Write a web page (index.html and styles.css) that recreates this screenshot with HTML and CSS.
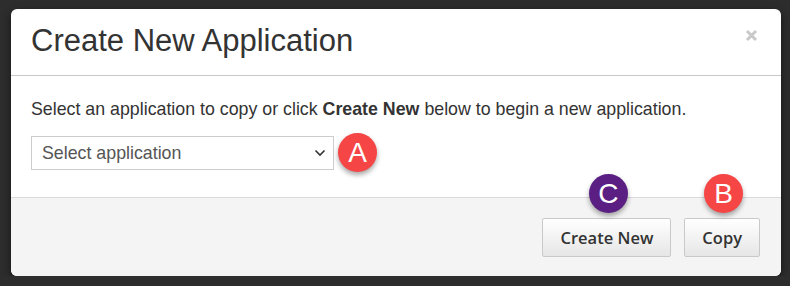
FILE: index.html
```html
<!DOCTYPE html>
<html lang="en">

<head>
    <meta charset="utf-8">
    <meta name="viewport" content="width=device-width, initial-scale=1.0">
    <title>Create New Application</title>
    <link rel="stylesheet" href="styles.css">
</head>

<body>
    <div class="modal">
        <header class="modal-header">
            <h1 class="modal-title">Create New Application</h1>
            <button class="close" aria-label="Close">
                <svg width="13" height="13" viewBox="0 0 13 13">
                    <path d="M2 2 L11 11 M11 2 L2 11" stroke="#c9c9c9" stroke-width="3" />
                </svg>
            </button>
        </header>

        <section class="modal-body">
            <p class="intro">Select an application to copy or click <b>Create New</b> below to begin a new application.</p>
            <div class="select-row">
                <div class="select">
                    <span>Select application</span>
                    <svg width="12" height="8" viewBox="0 0 12 8">
                        <path d="M1.5 1.5 L6 6 L10.5 1.5" fill="none" stroke="#333" stroke-width="1.6" />
                    </svg>
                </div>
                <span class="badge red">A</span>
            </div>
        </section>

        <footer class="modal-footer">
            <button class="btn">Create New<span class="badge purple">C</span></button>
            <button class="btn">Copy<span class="badge red">B</span></button>
        </footer>
    </div>
</body>

</html>
```

FILE: styles.css
```css
* {
    box-sizing: border-box;
}

body {
    margin: 0;
    padding: 9px 9px 0 11px;
    background-color: #2d2d2d;
    font-family: "Liberation Sans", Arial, sans-serif;
    color: #333333;
}

.modal {
    width: 770px;
    background-color: #ffffff;
    border-radius: 6px;
    overflow: hidden;
    box-shadow: 0 3px 9px rgba(0, 0, 0, 0.5);
}

.modal-header {
    display: flex;
    justify-content: space-between;
    align-items: flex-start;
    padding: 15px 23px 17px 20px;
    border-bottom: 1px solid #c8c8c8;
}

.modal-title {
    margin: 0;
    font-size: 31px;
    font-weight: normal;
    line-height: 34px;
}

.close {
    margin-top: 5px;
    padding: 0;
    border: none;
    background: none;
    line-height: 0;
}

.modal-body {
    padding: 23px 20px 27px 20px;
}

.intro {
    margin: 0 0 17px 0;
    font-size: 17.8px;
    line-height: 20px;
}

.select-row {
    display: flex;
    align-items: center;
    gap: 4px;
}

.select {
    display: flex;
    justify-content: space-between;
    align-items: center;
    width: 303px;
    height: 34px;
    padding: 0 7px 0 10px;
    border: 1px solid #cccccc;
    font-size: 17.8px;
    color: #555555;
}

.badge {
    display: flex;
    justify-content: center;
    align-items: center;
    width: 39px;
    height: 39px;
    border-radius: 50%;
    color: #ffffff;
    font-family: "Liberation Sans", Arial, sans-serif;
    font-size: 28px;
    font-weight: normal;
    box-shadow: 0 3px 5px rgba(0, 0, 0, 0.35);
}

.select-row .badge {
    margin: -3px 0 -2px 0;
}

.red {
    background-color: #f54545;
}

.purple {
    background-color: #5b1f83;
}

.modal-footer {
    display: flex;
    justify-content: flex-end;
    gap: 13px;
    padding: 20px 21px 19px 20px;
    border-top: 1px solid #dadada;
    background-color: #f4f4f4;
}

.btn {
    position: relative;
    height: 39px;
    padding: 0 17px;
    border: 1px solid #c9c9c9;
    border-radius: 2px;
    background: linear-gradient(#ffffff, #e6e6e6);
    font-family: "Open Sans", sans-serif;
    font-size: 16.5px;
    font-weight: 600;
    color: #333333;
}

.btn .badge {
    position: absolute;
    top: -45px;
    left: 50%;
    margin-left: -18px;
}
```
